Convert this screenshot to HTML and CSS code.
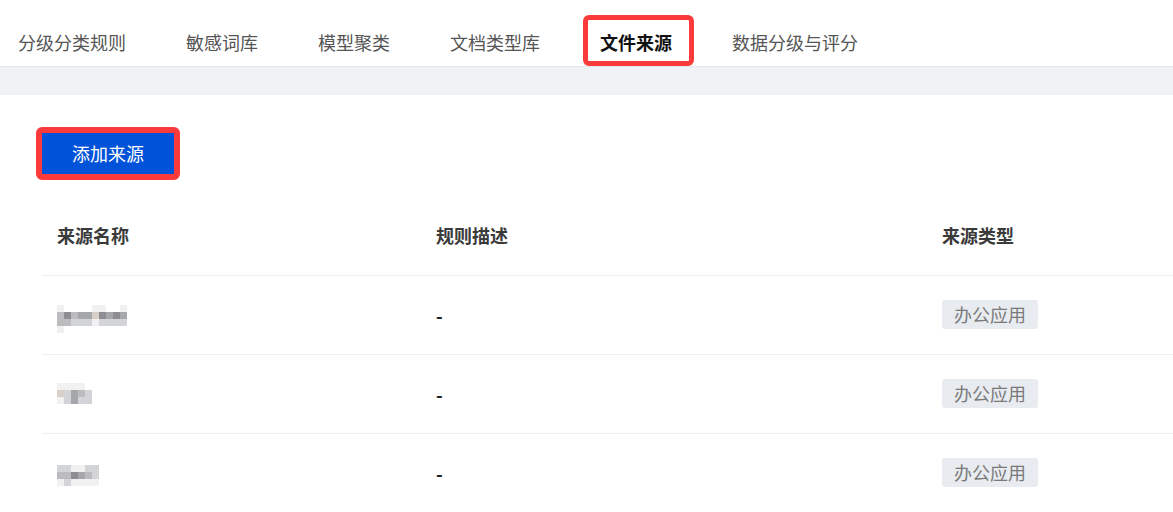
FILE: index.html
```html
<!DOCTYPE html>
<html lang="zh-CN">
<head>
<meta charset="utf-8">
<title>文件来源</title>
<link rel="stylesheet" href="styles.css">
</head>
<body>
<div class="page">
  <nav class="tabs">
    <a class="tab">分级分类规则</a>
    <a class="tab">敏感词库</a>
    <a class="tab">模型聚类</a>
    <a class="tab">文档类型库</a>
    <a class="tab active">文件来源</a>
    <a class="tab">数据分级与评分</a>
  </nav>
  <div class="band"></div>
  <main class="content">
    <div class="btn-wrap"><button class="btn">添加来源</button></div>
    <table class="tbl">
      <colgroup>
        <col class="c1"><col class="c2"><col class="c3">
      </colgroup>
      <thead>
        <tr><th>来源名称</th><th>规则描述</th><th>来源类型</th></tr>
      </thead>
      <tbody>
        <tr>
          <td>
            <div class="blur w10 b1">
              <span class="p1"></span><span></span><span></span><span></span><span></span><span class="p1"></span><span class="p1"></span><span></span><span></span><span class="p1"></span>
              <span class="p3"></span><span class="p5"></span><span class="p3"></span><span class="p4"></span><span class="p4"></span><span class="p2b"></span><span class="p5"></span><span class="p4"></span><span class="p5"></span><span class="p4"></span>
              <span class="p3"></span><span class="p3"></span><span class="p2"></span><span class="p2"></span><span class="p2"></span><span class="p1"></span><span class="p2"></span><span class="p2"></span><span class="p2"></span><span class="p2"></span>
              <span class="p1"></span>
            </div>
          </td>
          <td class="dash">-</td>
          <td><span class="tag">办公应用</span></td>
        </tr>
        <tr>
          <td>
            <div class="blur w5">
              <span class="p1"></span><span class="p1"></span><span class="p1"></span><span class="p1"></span><span></span>
              <span class="p2b"></span><span class="p2"></span><span class="p4"></span><span class="p3"></span><span class="p2"></span>
              <span class="p1"></span><span class="p2"></span><span class="p4"></span><span class="p2"></span><span class="p2"></span>
            </div>
          </td>
          <td class="dash">-</td>
          <td><span class="tag">办公应用</span></td>
        </tr>
        <tr>
          <td>
            <div class="blur w6 b3">
              <span class="p2"></span><span class="p2"></span><span class="p1"></span><span class="p1"></span><span class="p2"></span><span class="p2"></span>
              <span class="p3"></span><span class="p3"></span><span class="p5"></span><span class="p4"></span><span class="p3"></span><span class="p2"></span>
              <span class="p1"></span><span class="p2"></span><span class="p1"></span><span class="p1"></span><span class="p1"></span><span class="p1"></span>
            </div>
          </td>
          <td class="dash">-</td>
          <td><span class="tag">办公应用</span></td>
        </tr>
      </tbody>
    </table>
  </main>
</div>
</body>
</html>
```

FILE: styles.css
```css
* { box-sizing: border-box; }

html, body {
  margin: 0;
  padding: 0;
  background: #ffffff;
  overflow: hidden;
}

body {
  font-family: "Noto Sans CJK SC", "Noto Sans", "Liberation Sans", sans-serif;
  color: #333;
}

.page {
  width: 1173px;
}

.tabs {
  display: flex;
  gap: 60px;
  padding-left: 18px;
  height: 66px;
  background: #fff;
}

.tab {
  position: relative;
  padding-top: 30px;
  font-size: 18px;
  line-height: 24px;
  color: #555;
  white-space: nowrap;
  cursor: pointer;
}

.tab.active {
  color: #111;
  font-weight: 700;
}

.tab.active::after {
  content: "";
  position: absolute;
  left: -17px;
  right: -22px;
  top: 15px;
  bottom: 0;
  border: 5px solid #fb3b3b;
  border-radius: 6px;
}

.band {
  height: 29px;
  background: #f0f2f5;
  border-top: 1px solid #e6e8ee;
}

.content {
  padding: 32px 0 0 42px;
}

.btn-wrap {
  display: inline-flex;
  margin-left: -6px;
  border: 6px solid #fb3b3b;
  border-radius: 6px;
}

.btn {
  width: 132px;
  height: 41px;
  border: 0;
  padding: 0;
  background: #0052d9;
  color: #fff;
  font-family: inherit;
  font-size: 18px;
  line-height: 41px;
}

.tbl {
  margin-top: 16px;
  width: 100%;
  border-collapse: collapse;
  table-layout: fixed;
}

.c1 { width: 379px; }
.c2 { width: 506px; }

.tbl th,
.tbl td {
  height: 79px;
  padding: 0 15px;
  text-align: left;
  vertical-align: middle;
  border-bottom: 1px solid #eeeeee;
  font-size: 18px;
}

.tbl th {
  font-weight: 700;
  color: #3a3a3a;
}

.dash {
  color: #1a1a1a;
  font-weight: 700;
}

.tag {
  display: inline-block;
  height: 29px;
  line-height: 29px;
  padding: 0 12px;
  background: #e8ebf0;
  color: #7a7a7a;
  border-radius: 3px;
  font-size: 18px;
}

.blur {
  display: grid;
  grid-auto-rows: 7px;
}

.blur.w10 { grid-template-columns: repeat(10, 7px); }
.blur.w5 { grid-template-columns: repeat(5, 7px); }
.blur.w6 { grid-template-columns: repeat(6, 7px); }
.blur.b1 { margin-top: 8px; }
.blur.b3 { margin-top: 6px; }

.p1 { background: #f1f1f2; }
.p2 { background: #d3d4d7; }
.p2b { background: #d8d0c8; }
.p3 { background: #bcbbbd; }
.p4 { background: #a5a7ab; }
.p5 { background: #8e8e92; }
```
